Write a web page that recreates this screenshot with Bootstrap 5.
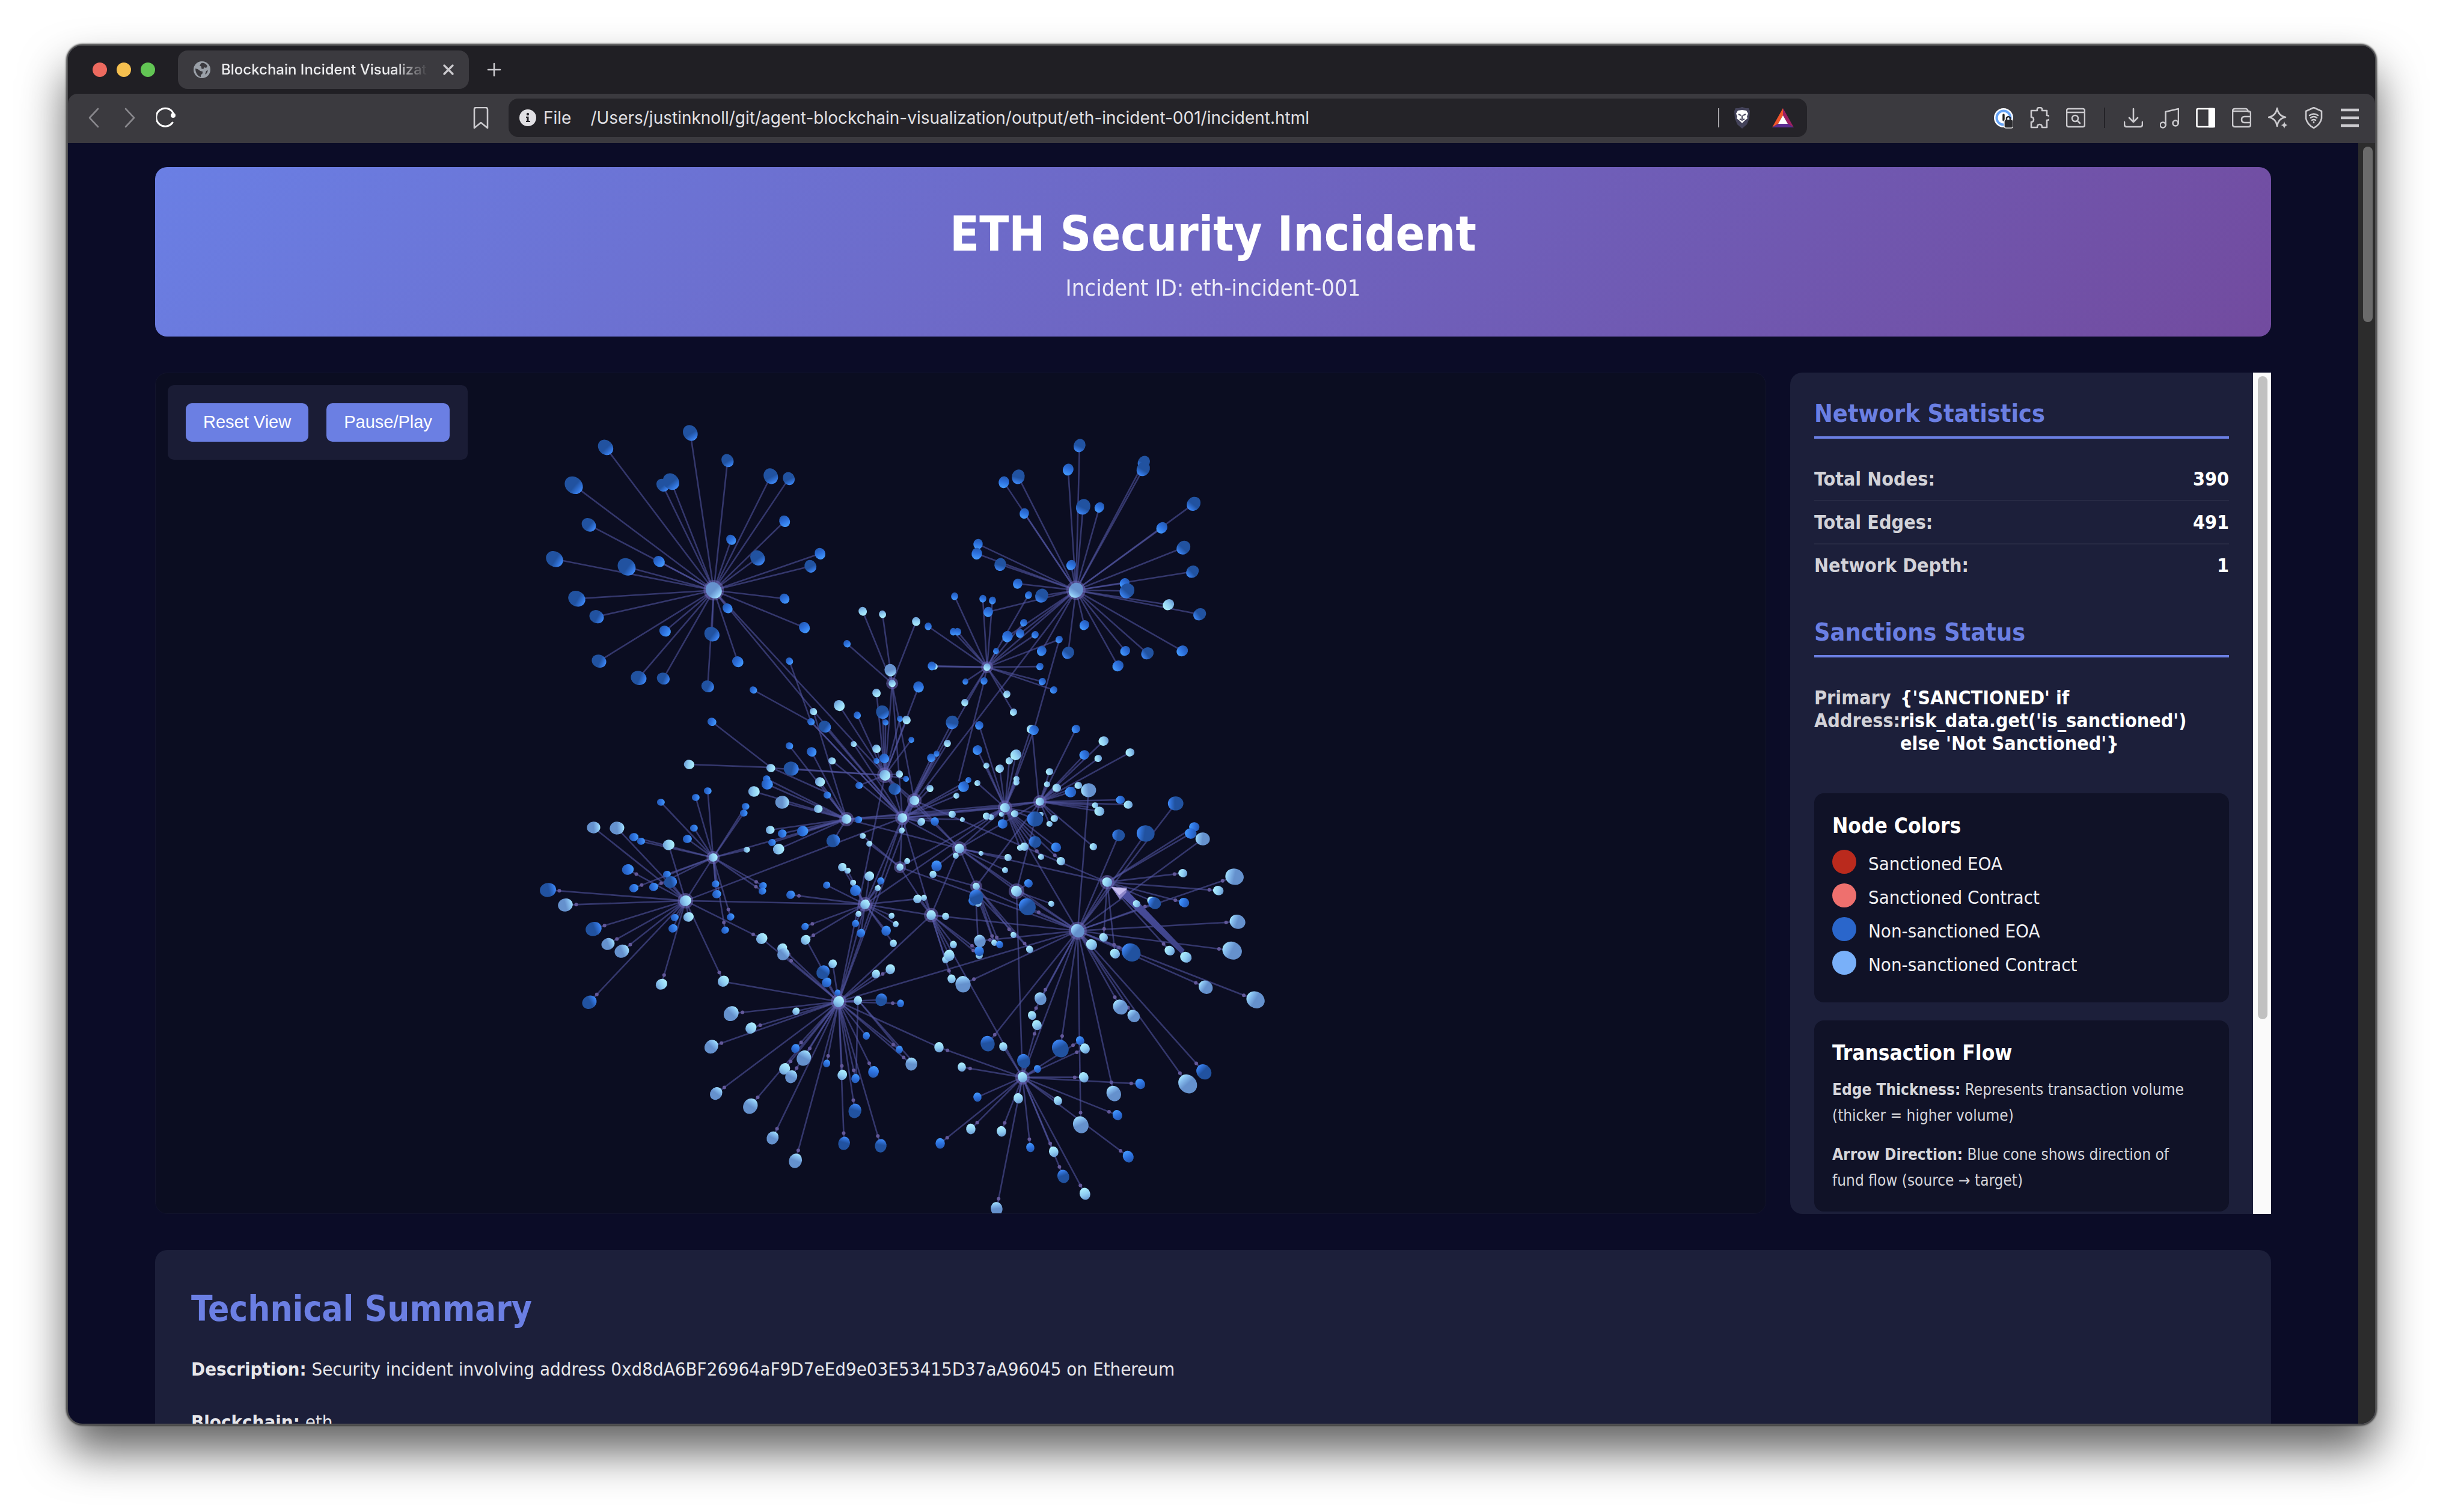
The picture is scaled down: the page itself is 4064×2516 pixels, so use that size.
<!DOCTYPE html>
<html lang="en">
<head>
<meta charset="utf-8">
<meta name="viewport" content="width=device-width, initial-scale=1">
<title>Blockchain Incident Visualization</title>
<link href="https://cdn.jsdelivr.net/npm/bootstrap@5.3.0/dist/css/bootstrap.min.css" rel="stylesheet">
<style>
:root{--accent:#6b7fe3;--panel:#1c1f3a;--inset:#101227;--ui:"Inter","Liberation Sans",sans-serif}
body{background:#fff;color:#fff;font-family:"DejaVu Sans Condensed","DejaVu Sans",sans-serif;font-size:31px;line-height:1.25;height:100vh;padding:74px 111px 145px}
.browser{border:2px solid #505052;border-radius:26px;background:#0b0c27;box-shadow:0 0 3px 1px rgba(0,0,0,.75),0 44px 76px rgba(0,0,0,.62)}
/* browser chrome */
.tabstrip{background:#201f24;height:80px;padding:0 41px;font-family:var(--ui)}
.light{width:24px;height:24px;border-radius:50%}
.tab-item{width:484px;height:64px;margin-left:38px;padding:0 18px 0 26px;gap:18px;border-radius:16px;background:#3b3a3f;font-size:24px;font-weight:500;color:#ececee}
.tab-name{overflow:hidden;white-space:nowrap;-webkit-mask-image:linear-gradient(90deg,#000 84%,transparent);mask-image:linear-gradient(90deg,#000 84%,transparent)}
.chrome-btn{width:32px;height:36px;color:#cbcace}
.chrome-btn svg,.glyph{display:block;width:100%;height:100%;fill:none;stroke:currentColor;stroke-width:2.6;stroke-linecap:round;stroke-linejoin:round}
.dim{color:#88878c}
.plus-btn{margin-left:26px}
.toolbar-row{display:grid;grid-template-columns:733px minmax(0,1fr) 945px;align-items:center;background:#3b3a3f;padding:8px 0 10px;border-radius:16px 16px 0 0;font-family:var(--ui)}
.nav-group{gap:28px;padding:0 30px 0 27px}
.tool-group{gap:28px;padding-right:26px}
.address-box{height:64px;border-radius:16px;background:#242328;padding:0 22px 0 18px;color:#e1e0e4;font-size:28px}
.address-box input{background:none;border:0;outline:0;color:inherit;font:inherit;min-width:0;padding:0}
.info{width:28px;height:28px}
.rule-v{width:2px;height:32px;background:#a3a2a6}
.rule-dark{width:8px;height:34px;border-left:2px solid #242328;margin-left:3px;margin-right:-3px}
.mini{width:36px;height:36px}
/* page */
.content-col{max-width:3520px;padding-top:40px;gap:60px}
.hero{border-radius:20px;background:linear-gradient(135deg,#6a7fe4 0%,#724b9f 100%);padding:60px 60px 58px}
.hero h1{font-size:80px;line-height:104px;font-weight:700;margin:0 0 14px}
.hero p{font-size:38px;line-height:46px;opacity:.88;margin:0}
.graph-row{gap:40px;height:1400px}
.graph-box{border:1px solid #12142c;border-radius:20px;background:#0b0d21}
.graph-box svg{width:100%;height:100%}
.controls{top:20px;left:20px;padding:30px;gap:30px;border-radius:10px;background:#1a1c35}
.btn-accent{--bs-btn-bg:var(--accent);--bs-btn-color:#fff;--bs-btn-hover-bg:#5a6fd6;--bs-btn-hover-color:#fff;--bs-btn-border-width:0;--bs-btn-border-radius:10px;--bs-btn-padding-x:29px;--bs-btn-padding-y:0;height:64px;font-family:"Liberation Sans",Arial,sans-serif;font-size:29px}
.side-panel{width:800px;border-radius:20px 0 0 20px;background:var(--panel)}
.side-body{padding:40px}
.side-title{color:var(--accent);font-size:41px;font-weight:700;line-height:56px;border-bottom:4px solid var(--accent);padding-bottom:10px;margin:0 0 32px}
.stat-list{margin:0 0 48px}
.stat{padding:16px 0;font-size:32px;line-height:38px;font-weight:700}
.stat+.stat{border-top:2px solid #272a44}
.stat dt{color:#d2d2d8}
.stat dd{margin:0}
.inset-card{background:var(--inset);border-radius:16px;padding:30px;margin-bottom:30px}
.inset-card h3{font-size:35px;line-height:48px;font-weight:700;margin:0 0 16px}
.legend{gap:10px;margin:0 0 10px}
.legend li{gap:20px;font-size:31px;line-height:46px;color:#f0f0f3}
.swatch{width:40px;height:40px;border-radius:50%}
.flow-note{font-size:26px;line-height:43px;color:#d6d6db;margin:0 0 22px}
.flow-note:last-child{margin:0}
.side-track{width:30px;background:#fafafa;padding:6px 6px 0 8px}
.side-thumb{height:1070px;border-radius:8px;background:#c1c1c1}
.page-track{width:28px;background:#2c2c2c;padding:6px 4px 0 8px}
.page-thumb{height:292px;border-radius:8px;background:#6b6b6b}
.summary{background:var(--panel);border-radius:20px;padding:60px;color:#e6e6ea}
.summary h2{color:var(--accent);font-size:58px;line-height:76px;font-weight:700;margin:0 0 36px}
.summary p{line-height:52px;margin:0 0 36px}
</style>
<script src="https://cdn.jsdelivr.net/npm/bootstrap@5.3.0/dist/js/bootstrap.bundle.min.js"></script>
</head>
<body class="overflow-hidden">
<div class="browser h-100 d-flex flex-column overflow-hidden">
  <header>
    <div class="tabstrip d-flex align-items-center">
      <div class="d-flex gap-3">
        <span class="light" style="background:#ed6a5f"></span><span class="light" style="background:#f5bf4f"></span><span class="light" style="background:#62c554"></span>
      </div>
      <div class="tab-item d-flex align-items-center">
        <svg class="flex-shrink-0" width="28" height="28" viewBox="0 0 28 28"><circle cx="14" cy="14" r="14" fill="#9aa0a8"/><path d="M13 3c4-1 8 1 10 5l-2 3-3-1-2 3-3-1v-3l-3-2zM3 12l4 1 4 3 4 1v3l-3 3v3C7 25 3 19 3 12zM21 16l3-1-2 5-3 2z" fill="#3b3a3f"/></svg>
        <span class="tab-name flex-grow-1">Blockchain Incident Visualization</span>
        <button class="btn p-0 border-0 chrome-btn flex-shrink-0" aria-label="Close tab"><svg viewBox="0 0 32 36"><path d="M9 11l14 14M23 11L9 25" stroke-width="3.4"/></svg></button>
      </div>
      <button class="btn p-0 border-0 chrome-btn plus-btn" aria-label="New tab"><svg viewBox="0 0 32 36"><path d="M16 8v20M6 18h20"/></svg></button>
    </div>
    <div style="background:#201f24">
    <nav class="toolbar-row" aria-label="Browser toolbar">
      <div class="nav-group d-flex">
        <button class="btn p-0 border-0 chrome-btn dim" aria-label="Back"><svg viewBox="0 0 32 36"><path d="M23 3L9 18l14 15"/></svg></button>
        <button class="btn p-0 border-0 chrome-btn dim" aria-label="Forward"><svg viewBox="0 0 32 36"><path d="M9 3l14 15L9 33"/></svg></button>
        <button class="btn p-0 border-0 chrome-btn text-white" aria-label="Reload"><svg viewBox="0 0 32 36"><path d="M27 26A15 15 0 1 1 28 10" stroke-width="3"/><circle cx="28" cy="14" r="4" fill="#fff" stroke="none"/></svg></button>
        <button class="btn p-0 border-0 chrome-btn ms-auto" aria-label="Bookmark"><svg viewBox="0 0 32 36"><path d="M5 4q0-3 3-3h16q3 0 3 3v31l-11-9L5 35z"/></svg></button>
      </div>
      <div class="address-box d-flex align-items-center">
        <svg class="info flex-shrink-0" viewBox="0 0 28 28"><circle cx="14" cy="14" r="14" fill="#e1e0e4"/><circle cx="14" cy="8" r="2.2" fill="#242328"/><path d="M11 12h4.500v7H18v2h-7v-2h1.500v-5H11z" fill="#242328"/></svg>
        <label for="addr" class="ms-2 ps-1 pe-4 me-2">File</label>
        <input id="addr" class="flex-grow-1" type="text" value="/Users/justinknoll/git/agent-blockchain-visualization/output/eth-incident-001/incident.html">
        <span class="rule-v me-3"></span>
        <svg class="mini me-3 ms-1" viewBox="0 0 36 36" style="margin-right:30px"><path d="M18 0l6 2 5 0 2 5-1 12-4 10-8 7-8-7-4-10L5 7l2-5 5 0z" fill="#44435a"/><path d="M18 5l7 1 3 5-2 5 1 3-5 4-4 4-4-4-5-4 1-3-2-5 3-5z" fill="#fff"/><path d="M12 12l4 2M24 12l-4 2M18 14v6M14 20l4 2 4-2" stroke="#44435a" stroke-width="2" fill="none"/></svg>
        <svg class="mini ms-3" viewBox="0 0 36 36"><path d="M18 2L0 34l10-6 8-14z" fill="#f2552c"/><path d="M18 2l18 32-10-6-8-14z" fill="#9e1f63"/><path d="M0 34h36l-10-6H10z" fill="#5b2d91"/><path d="M18 14l8 14H10z" fill="#fff"/></svg>
      </div>
      <div class="tool-group d-flex justify-content-end align-items-center">
        <button class="btn p-0 border-0 chrome-btn" aria-label="Password manager"><svg viewBox="0 0 32 36" stroke="none"><circle cx="16" cy="18" r="16" fill="#fff" stroke="none"/><circle cx="16" cy="18" r="11.500" stroke="#66a3f5" stroke-width="4"/><path d="M16 13v9" stroke="#222" stroke-width="3.500"/><rect x="17" y="21" width="15" height="14" rx="3" fill="#2a2a2e" stroke="#ddd" stroke-width="1.500"/><path d="M21 21v-3q3-4 6 0v3" stroke="#2a2a2e" stroke-width="2.500"/></svg></button>
        <button class="btn p-0 border-0 chrome-btn" aria-label="Extensions"><svg viewBox="0 0 32 36"><path d="M2 6h10q-1-5 4-5t4 5h8v8q5 0 5 4t-5 4v12h-8q0-5-4-5t-4 5H2v-9q4 0 4-4t-4-4z"/></svg></button>
        <button class="btn p-0 border-0 chrome-btn" aria-label="Search tabs"><svg viewBox="0 0 32 36"><rect x="1" y="3" width="30" height="30" rx="3"/><path d="M1 9h30"/><circle cx="15" cy="19" r="5"/><path d="M19 23l4 4"/></svg></button>
        <span class="rule-dark"></span>
        <button class="btn p-0 border-0 chrome-btn" aria-label="Downloads"><svg viewBox="0 0 32 36"><path d="M16 3v22M9 18l7 7 7-7M1 25v4q0 4 4 4h22q4 0 4-4v-4"/></svg></button>
        <button class="btn p-0 border-0 chrome-btn" aria-label="Media"><svg viewBox="0 0 32 36"><circle cx="5" cy="30" r="4.500"/><circle cx="26" cy="27" r="4.500"/><path d="M9.500 30V8L31 3v24"/></svg></button>
        <button class="btn p-0 border-0 chrome-btn text-white" aria-label="Sidebar"><svg viewBox="0 0 32 36"><rect x="1.500" y="3" width="29" height="30" rx="2"/><path d="M22 3h8.500v30H22z" fill="#fff"/></svg></button>
        <button class="btn p-0 border-0 chrome-btn" aria-label="Wallet"><svg viewBox="0 0 32 36"><path d="M1 7q0-4 4-4h18q3 0 4 5M1 7h26q4 0 4 4v18q0 4-4 4H5q-4 0-4-4zM31 16H21q-5 0-5 5t5 5h10"/></svg></button>
        <button class="btn p-0 border-0 chrome-btn" aria-label="Assistant"><svg viewBox="0 0 32 36"><path d="M15 2q2 13 14 15-12 2-14 15Q13 19 1 17 13 15 15 2z"/><path d="M27 24q1 6 6 6-5 1-6 6-1-5-6-6 5 0 6-6z" fill="currentColor" stroke="none"/></svg></button>
        <button class="btn p-0 border-0 chrome-btn" aria-label="VPN"><svg viewBox="0 0 32 36"><path d="M16 1l13 6v12q-2 10-13 16Q5 29 3 19V7z"/><path d="M9 14q7-5 14 0M11 18q5-4 10 0M13 22q3-2 6 0M16 25v1"/></svg></button>
        <button class="btn p-0 border-0 chrome-btn" aria-label="Menu"><svg viewBox="0 0 32 36"><path d="M1 5h30M1 18h30M1 31h30" stroke-width="4.500" stroke-linecap="butt"/></svg></button>
      </div>
    </nav>
    </div>
  </header>

  <div class="d-flex flex-grow-1 overflow-hidden" style="min-height:0">
    <main class="flex-grow-1 overflow-hidden">
      <div class="content-col mx-auto d-flex flex-column">
        <section class="hero text-center">
          <h1>ETH Security Incident</h1>
          <p>Incident ID: eth-incident-001</p>
        </section>

        <section class="graph-row d-flex">
          <div class="graph-box position-relative flex-grow-1 overflow-hidden">
            <svg id="graph" viewBox="0 0 2680 1400" preserveAspectRatio="xMidYMid slice" role="img" aria-label="Transaction network">
              <defs>
                <linearGradient id="bBig"><stop offset=".55" stop-color="#2152a0"/><stop offset=".8" stop-color="#2f6fd3"/><stop offset="1" stop-color="#408af8"/></linearGradient>
                <linearGradient id="bSmall"><stop offset="0" stop-color="#2459b0"/><stop offset=".45" stop-color="#2c6fdc"/><stop offset="1" stop-color="#459bff"/></linearGradient>
                <linearGradient id="lBig"><stop offset=".5" stop-color="#6591cd"/><stop offset=".8" stop-color="#86bdee"/><stop offset="1" stop-color="#a4e4fd"/></linearGradient>
                <linearGradient id="lSmall"><stop offset="0" stop-color="#6a9bd4"/><stop offset=".45" stop-color="#8fcdf2"/><stop offset="1" stop-color="#b0f2ff"/></linearGradient>
                <linearGradient id="beam" x1="0" y1="0" x2="1" y2="1"><stop offset="0" stop-color="#4b4fa0"/><stop offset="1" stop-color="#3c4184"/></linearGradient>
              </defs>
            </svg>
            <div class="controls position-absolute d-flex">
              <button type="button" class="btn btn-accent">Reset View</button>
              <button type="button" class="btn btn-accent">Pause/Play</button>
            </div>
          </div>

          <aside class="side-panel d-flex flex-shrink-0 overflow-hidden">
            <div class="side-body flex-grow-1 overflow-hidden">
              <h2 class="side-title">Network Statistics</h2>
              <dl class="stat-list">
                <div class="stat d-flex justify-content-between"><dt>Total Nodes:</dt><dd>390</dd></div>
                <div class="stat d-flex justify-content-between"><dt>Total Edges:</dt><dd>491</dd></div>
                <div class="stat d-flex justify-content-between"><dt>Network Depth:</dt><dd>1</dd></div>
              </dl>
              <h2 class="side-title">Sanctions Status</h2>
              <dl class="stat-list">
                <div class="stat d-flex"><dt>Primary<br>Address:</dt><dd>{'SANCTIONED' if<br>risk_data.get('is_sanctioned')<br>else 'Not Sanctioned'}</dd></div>
              </dl>
              <div class="inset-card">
                <h3>Node Colors</h3>
                <ul class="legend list-unstyled d-flex flex-column">
                  <li class="d-flex"><span class="swatch" style="background:#ba2a1d"></span>Sanctioned EOA</li>
                  <li class="d-flex"><span class="swatch" style="background:#ee706e"></span>Sanctioned Contract</li>
                  <li class="d-flex"><span class="swatch" style="background:#2a66cb"></span>Non-sanctioned EOA</li>
                  <li class="d-flex"><span class="swatch" style="background:#79b0f9"></span>Non-sanctioned Contract</li>
                </ul>
              </div>
              <div class="inset-card">
                <h3>Transaction Flow</h3>
                <p class="flow-note"><strong>Edge Thickness:</strong> Represents transaction volume<br>(thicker = higher volume)</p>
                <p class="flow-note"><strong>Arrow Direction:</strong> Blue cone shows direction of<br>fund flow (source → target)</p>
              </div>
            </div>
            <div class="side-track flex-shrink-0"><div class="side-thumb"></div></div>
          </aside>
        </section>

        <section class="summary">
          <h2>Technical Summary</h2>
          <p><strong>Description:</strong> Security incident involving address 0xd8dA6BF26964aF9D7eEd9e03E53415D37aA96045 on Ethereum</p>
          <p><strong>Blockchain:</strong> eth</p>
        </section>
      </div>
    </main>
    <div class="page-track flex-shrink-0"><div class="page-thumb"></div></div>
  </div>
</div>

<script>
// Hub accounts: [x, y, radius]
const hubs = {
  A:[929,362,13], B:[1532,362,12], C:[1384,490,6], D:[1226,517,6],
  H0:[1243,741,8], H1:[1214,670,9], H2:[1263,712,8], H3:[928,807,7], H4:[882,879,9], H5:[1137,1047,9],
  H6:[1181,885,8], H7:[1150,743,8], H8:[1239,823,6], H9:[1414,724,8], H10:[1472,714,7], H11:[1338,792,8],
  H12:[1535,929,11], H13:[1584,848,8], H14:[1291,903,8], H15:[1443,1173,8], H16:[1366,855,6], H17:[1433,863,9]
};
// Layout quadrants: origin x, origin y, scale x, scale y
const quads = [[622,40,2.376,2.376],[1262,40,2.529,2.376],[622,640,2.376,2.063],[1262,640,2.529,2.01]];
// [quadrant, hub, externally owned accounts, contracts], each account "x y r"
const groups = [
 [0,'A','636 143 12;302 200 12;784 252 10;956 313 12;1027 322 10;176 349 14;528 350 10;561 336 13;235 506 11;1009 491 9;798 566 8;902 637 12;1151 620 9;1112 671 10;99 642 13;386 673 14;514 652 9;188 798 13;266 869 11;1010 798 8;783 837 8;538 927 9;722 938 12;1088 913 9;276 1045 11;432 1112 12;531 1115 10;824 1049 9;705 1145 10',''],
 [0,'D','1256 977 6','1318 848 7;1397 860 6;1531 889 7;1429 1080 10'],
 [0,'H1','1397 1248 11;1408 1287 5;1373 1441 5;1510 1356 5;1466 1273 5;1539 1148 9;1297 1259 6','1374 1172 7;1225 1222 9;1491 1278 7;1374 1393 7'],
 [0,'H0','1169 1305 10;1114 1286 6;1405 1430 8','1284 1373 5'],
 [0,'H7','1028 1381 6;1117 1404 8','1123 1246 6'],
 [1,'B','699 192 10;651 287 9;439 315 11;379 338 9;465 462 8;969 259 10;965 284 11;1179 422 11;1045 517 9;714 434 12;781 437 8;1135 596 11;1174 692 10;270 581 8;265 620 9;364 664 10;663 665 8;437 738 8;887 736 8;897 768 12;538 786 11;1204 860 10;718 903 8;313 850 8;395 947 9;448 935 7;891 1006 8;984 1014 10;1130 1006 9;861 1064 9;649 1012 10;539 1005 8','1072 821 9'],
 [1,'C','172 789 6;291 799 6;332 806 6;484 783 6;60 908 6;168 929 6;184 929 6;462 893 6;510 940 6;346 1005 5;612 961 6;531 1067 6;541 1126 6;589 1160 6;75 1064 7;218 1127 5;297 1125 6','392 1175 6;420 1247 6;216 1210 6;88 1068 5'],
 [1,'H10','683 1315 7;718 1416 8','799 1362 8;910 1406 7;776 1431 6'],
 [1,'H9','506 1318 8;275 1300 7;268 1397 8','493 1314 7;430 1415 9'],
 [1,'H0','163 1287 11;73 1429 7;97 1411 5','142 1372 6'],
 [2,'H4','73 455 12;390 385 9;254 591 12;238 841 11;559 429 10;569 587 7;575 551 6','255 241 10;346 243 11;552 302 9;143 507 11;312 641 10;366 667 11;523 779 9;630 548 8;767 770 9;919 624 9'],
 [2,'H3','520 154 6;658 138 6;705 116 6;855 170 6;848 191 6;652 243 6;624 281 7;413 275 7;443 289 6;413 450 7;492 446 7;545 402 6;737 436 6;742 470 7;925 442 6;922 460 6;795 548 6;775 594 6','861 318 5'],
 [2,'H5','1053 1000 7;1176 1052 6;1290 1103 7;1361 1082 9;1288 1216 11;1245 1327 10;1390 1334 10;1163 738 11;1175 774 8;1219 809 5;1333 958 6;1463 1004 6;1468 846 6;1393 833 10','799 881 12;876 931 9;720 994 11;1055 872 6;1085 1034 12;1010 1070 9;1037 1097 10;740 1155 10;874 1198 12;963 1308 10;1053 1387 11;1237 1091 8;1511 1055 10;1001 656 8;1005 677 10;1300 835 7;1371 745 7;1429 728 8;1200 710 7'],
 [2,'H6','1033 472 7;1176 440 6;1090 582 6;1290 458 9;1389 424 6;1289 571 6;1312 605 7;1411 596 8','1239 377 7;1260 390 5;1281 431 5;1346 408 8;1378 450 5;1301 539 5;1433 544 5;1449 573 5;1440 640 6;1094 628 8;1535 487 7'],
 [2,'H7','938 75 6;940 92 9;1178 130 6;1000 262 7;1081 253 9;1303 214 6;1202 286 11;959 292 6','888 117 9;1001 154 11;1142 177 7;1150 84 8;952 249 7;987 315 9'],
 [2,'H1','1037 40 12;1305 96 6;1490 74 5;1444 109 10','1463 58 6;955 37 7'],
 [2,'H0','','1473 252 5;1550 223 6;1197 12 6'],
 [2,'H8','','1318 270 5;1345 298 5;1494 357 5'],
 [3,'H12','862 262 10;976 255 14;1102 154 12;915 654 15;477 501 14;310 958 12;617 974 14;1222 1053 12;1014 488 10','736 110 12;1350 399 14;1364 551 12;1341 647 15;1439 812 14;1230 769 11;1153 1094 15;869 836 12;925 866 10;842 1126 12;702 1230 13;534 808 10;208 759 13;748 627 9;278 615 10;499 864 7;1217 273 11'],
 [3,'H13','1180 233 8;1166 256 9;1138 487 8','1134 387 7;1281 446 8;1002 481 7;938 490 6;799 604 7;846 657 8;1078 648 8'],
 [3,'H15','462 1018 11;521 1043 6;700 948 7;268 1138 7;111 1292 8;490 1307 7;630 1403 10;903 1336 9;858 1198 8;954 1093 8','105 971 8;203 1037 7;377 969 7;519 896 8;720 975 8;716 1071 8;439 1141 8;607 1149 7;240 1245 8;370 1252 8;589 1320 8;721 1462 9;348 1512 10'],
 [3,'H10','660 116 9;869 142 7','572 49 6;562 91 5;603 103 7;693 94 6;904 158 7;765 160 5;782 181 8;592 205 6;572 223 5;755 299 6'],
 [3,'H9','375 223 8;510 207 13;512 283 10;599 302 8','307 29 5;362 38 7;403 12 6;432 73 5;432 84 5;268 87 5;424 189 6;305 196 6;327 202 5;369 190 4;535 190 4;448 303 5;465 300 7;535 333 5;619 347 7'],
 [3,'H0','88 215 7;210 98 9;229 76 5','32 216 6;69 105 6;161 190 6;206 210 4;180 128 5'],
 [3,'H11','96 363 9','177 330 5;282 321 4;397 336 6;385 378 5'],
 [3,'H16','250 480 8;264 469 12;362 627 6','82 392 6;270 488 6;419 594 5;489 644 6;340 622 5'],
 [3,'H17','484 423 7','579 491 5'],
 [3,'H14','275 650 8','275 664 6;17 473 6;44 470 5;134 532 6;167 627 6;134 678 6;150 664 9;160 742 7']
];
// Accounts linked to another account instead of a hub: x, y, r, target x, y, kind
const leaves = [
 [1055,480,6,1091,581,'b'],[995,528,6,1091,581,'b'],[926,581,7,1024,657,'b'],[888,652,8,1024,657,'l'],[1715,973,9,1596,852,'l']
];
const links = ['A H0','A H1','B H0','B C','C H0','H0 H9','H0 H10','H0 H11','H0 H6','H0 H5','H0 H7','H0 H2','H0 H4','H1 H2','H1 H5','H2 H11','H2 D','D H0','D H1','H11 H12','H11 H16','H11 H17','H9 H11','H9 H10','H9 H12','H9 H7','H13 H11','H13 H2','H12 H13','H12 H17','H12 H16','H12 H14','H12 H5','H14 H5','H14 H15','H14 H11','H17 H15','H17 H10','H12 H15','H8 H9','H8 H14','H8 H0','H6 H4','H3 H4','H3 H7','H10 H11','H10 H7','H2 H5','H14 H6','H8 H12','H6 H5','H11 H7','H9 H6','H16 H10','H0 H14','H1 H11'];
// Single crossing edges
const spans = [[1504,445,1462,595],[1379,514,1337,680],[1024,657,1120,700],[941,1013,1137,1047],[1009,942,1137,1047],[1137,1047,1304,1123],[1083,944,1113,999],[1169,1044,1264,1151],[1169,1044,1166,1174],[1169,1044,1238,1127],[1365,867,1369,946],[1366,867,1396,950],[1366,867,1455,960],[1553,723,1472,714],[1459,595,1470,714],[1091,581,1243,741]];

const NS = 'http://www.w3.org/2000/svg', svg = document.getElementById('graph');
const add = (name, attrs) => { const el = document.createElementNS(NS, name); for (const k in attrs) el.setAttribute(k, attrs[k]); svg.appendChild(el); };
const line = (x1, y1, x2, y2) => add('line', {x1, y1, x2, y2, stroke: '#5357a3', 'stroke-opacity': .58, 'stroke-width': 2.6});
const cx = 1300, cy = 720;
const ball = (x, y, r, kind) => {
  const a = Math.atan2(cy - y, cx - x) * 180 / Math.PI, d = Math.hypot(cx - x, cy - y);
  add('ellipse', {cx: x, cy: y, rx: r * (1 + d / 5200), ry: r * .97, fill: `url(#${kind}${r > 9 ? 'Big' : 'Small'})`, transform: `rotate(${a.toFixed(0)} ${x} ${y})`});
};
const nodes = [];
for (const [q, h, eoa, contract] of groups) {
  const [ox, oy, sx, sy] = quads[q];
  [[eoa, 'b'], [contract, 'l']].forEach(([list, kind]) => list && list.split(';').forEach(s => {
    const [x, y, r] = s.split(' ').map(Number);
    nodes.push([Math.round(ox + x / sx), Math.round(oy + y / sy), r, kind, h]);
  }));
}
for (const s of links) { const [a, b] = s.split(' '); line(hubs[a][0], hubs[a][1], hubs[b][0], hubs[b][1]); }
spans.forEach(s => line(...s));
for (const [x, y, r, kind, h] of nodes) {
  const [hx, hy] = hubs[h]; line(x, y, hx, hy);
  const d = Math.hypot(hx - x, hy - y);
  if (y > 800 && d > 90) add('circle', {cx: x + (hx - x) * (r + 7) / d, cy: y + (hy - y) * (r + 7) / d, r: 3, fill: '#62589a'});
}
leaves.slice(0, 4).forEach(([x, y, , tx, ty]) => line(x, y, tx, ty));
// The one high-volume transfer
add('polygon', {points: '1708,968 1713,961 1618,862 1608,872', fill: 'url(#beam)'});
for (const k in hubs) { const [x, y, r] = hubs[k]; add('circle', {cx: x, cy: y, r: r + 4, fill: '#6d66b4', 'fill-opacity': .55}); ball(x, y, r, 'l'); }
for (const n of nodes.sort((a, b) => a[2] - b[2])) ball(...n);
leaves.forEach(([x, y, r, , , kind]) => ball(x, y, r, kind));
add('polygon', {points: '1591,856 1617,857 1616,865 1605,877', fill: '#8d87c9'});
add('polygon', {points: '1591,856 1617,859 1604,870', fill: '#c5bdf0'});
</script>
</body>
</html>
